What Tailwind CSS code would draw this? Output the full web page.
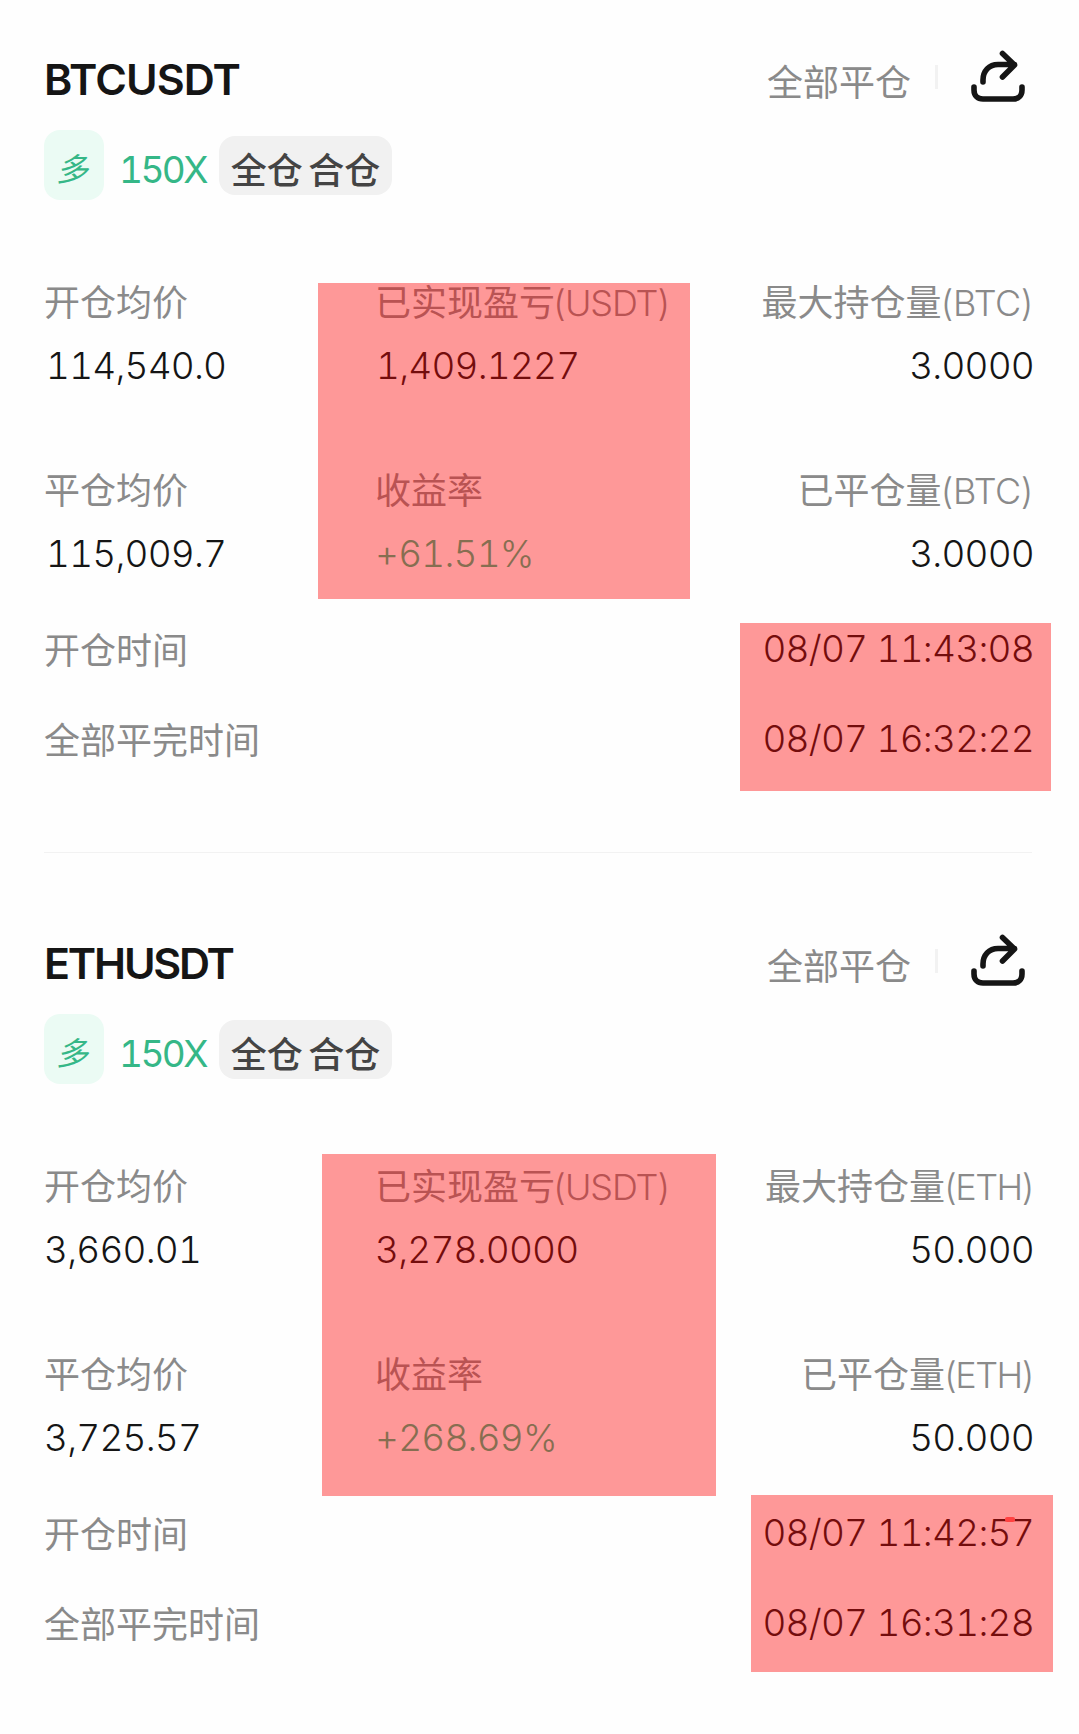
<!DOCTYPE html>
<html lang="zh-CN">
<head>
<meta charset="utf-8">
<title>历史仓位</title>
<script src="https://cdn.jsdelivr.net/npm/@tailwindcss/browser@4"></script>
</head>
<body class="relative h-[1734px] w-[1079px] overflow-hidden bg-[#fefefe] font-['Inter','Noto_Sans_CJK_SC',sans-serif] font-light text-[#151515]">

<section class="h-[884px] pl-11 pr-[45px] pt-[50px]">
  <header class="flex h-[58px] items-center justify-between">
    <h2 class="text-[43px] leading-[58px] font-semibold tracking-[-0.9px]">BTCUSDT</h2>
    <div class="flex items-center text-[36px] leading-[58px] text-[#8a8a8a]">
      <span class="pt-[7px] font-normal">全部平仓</span>
      <span class="mb-1 ml-[24px] h-6 w-[3px] bg-[#f2f2f2]"></span>
      <svg class="mb-[5px] ml-[30px] mr-1.5 h-[60px] w-[60px]" viewBox="0 0 60 60" fill="none" stroke="#151515" stroke-width="5.6" stroke-linecap="round" stroke-linejoin="round"><path d="M6 40v3c0 5.500 3.500 9 9 9h30c5.500 0 9-3.500 9-9v-3M15 35v-2c0-9 6-15.500 15-15.500h16.500M34.500 6.500 46.500 18 34.500 30"/></svg>
    </div>
  </header>
  <div class="mt-[22px] flex h-[70px] items-center">
    <span class="flex h-[70px] w-[60px] items-center justify-center rounded-[16px] bg-[#ebfbf4] pt-[9px] pr-1 text-[32px] text-[#35b787] italic font-normal">多</span>
    <span class="ml-[15px] w-[100px] pt-[9px] text-[37px] leading-[61px] font-normal tabular-nums tracking-[-2.6px] text-[#35b787]">150X</span>
    <span class="flex h-[59px] w-[173px] items-center justify-center rounded-[16px] bg-[#f1f1f1] pt-[12px] text-[36px] font-medium text-[#444] [word-spacing:-4px]">全仓 合仓</span>
  </div>
  <div class="mt-[82px] grid grid-cols-[331px_1fr_auto] grid-rows-[40px_40px_40px_40px] gap-y-[23px] leading-10 text-[37px] tabular-nums">
    <span class="pt-[1px] text-[36px] font-normal text-[#8a8a8a]">开仓均价</span>
    <span class="pt-[1px] text-[36px] font-normal text-[#8a8a8a]">已实现盈亏<span class="-ml-[3px] font-light tracking-[-1.1px]">(USDT)</span></span>
    <span class="pt-[1px] text-right text-[36px] font-normal text-[#8a8a8a]">最大持仓量<span class="-ml-[2px] font-light tracking-[-0.6px]">(BTC)</span></span>
    <span class="pt-[1px] pl-[2px] tracking-[-0.8px]">114,540.0</span>
    <span class="pt-[1px] pl-[1px] tracking-[-0.8px]">1,409.1227</span>
    <span class="pt-[1px] text-right tracking-[-0.8px]">3.0000</span>
    <span class="mt-[62px] pt-[1px] text-[36px] font-normal text-[#8a8a8a]">平仓均价</span>
    <span class="mt-[62px] pt-[1px] text-[36px] font-normal text-[#8a8a8a]">收益率</span>
    <span class="mt-[62px] pt-[1px] text-right text-[36px] font-normal text-[#8a8a8a]">已平仓量<span class="-ml-[2px] font-light tracking-[-0.6px]">(BTC)</span></span>
    <span class="mt-[62px] pt-[1px] pl-[2px] tracking-[-0.8px]">115,009.7</span>
    <span class="mt-[62px] pt-[1px] tracking-[-0.8px] text-[#35b787]">+61.51%</span>
    <span class="mt-[62px] pt-[1px] text-right tracking-[-0.8px]">3.0000</span>
  </div>
  <dl class="mt-[118px] flex flex-col gap-[50px] leading-10 text-[37px] tabular-nums">
    <div class="flex h-10 justify-between"><dt class="pt-[2px] text-[36px] font-normal text-[#8a8a8a]">开仓时间</dt><dd class="tracking-[-0.75px]">08/07 11:43:08</dd></div>
    <div class="flex h-10 justify-between"><dt class="pt-[2px] text-[36px] font-normal text-[#8a8a8a]">全部平完时间</dt><dd class="tracking-[-0.75px]">08/07 16:32:22</dd></div>
  </dl>
  <hr class="mt-[93px] mr-[2px] border-[#f2f2f2]">
</section>

<section class="h-[850px] pl-11 pr-[45px] pt-[50px]">
  <header class="flex h-[58px] items-center justify-between">
    <h2 class="text-[43px] leading-[58px] font-semibold tracking-[-2.2px]">ETHUSDT</h2>
    <div class="flex items-center text-[36px] leading-[58px] text-[#8a8a8a]">
      <span class="pt-[7px] font-normal">全部平仓</span>
      <span class="mb-1 ml-[24px] h-6 w-[3px] bg-[#f2f2f2]"></span>
      <svg class="mb-[5px] ml-[30px] mr-1.5 h-[60px] w-[60px]" viewBox="0 0 60 60" fill="none" stroke="#151515" stroke-width="5.6" stroke-linecap="round" stroke-linejoin="round"><path d="M6 40v3c0 5.500 3.500 9 9 9h30c5.500 0 9-3.500 9-9v-3M15 35v-2c0-9 6-15.500 15-15.500h16.500M34.500 6.500 46.500 18 34.500 30"/></svg>
    </div>
  </header>
  <div class="mt-[22px] flex h-[70px] items-center">
    <span class="flex h-[70px] w-[60px] items-center justify-center rounded-[16px] bg-[#ebfbf4] pt-[9px] pr-1 text-[32px] text-[#35b787] italic font-normal">多</span>
    <span class="ml-[15px] w-[100px] pt-[9px] text-[37px] leading-[61px] font-normal tabular-nums tracking-[-2.6px] text-[#35b787]">150X</span>
    <span class="flex h-[59px] w-[173px] items-center justify-center rounded-[16px] bg-[#f1f1f1] pt-[12px] text-[36px] font-medium text-[#444] [word-spacing:-4px]">全仓 合仓</span>
  </div>
  <div class="mt-[82px] grid grid-cols-[331px_1fr_auto] grid-rows-[40px_40px_40px_40px] gap-y-[23px] leading-10 text-[37px] tabular-nums">
    <span class="pt-[1px] text-[36px] font-normal text-[#8a8a8a]">开仓均价</span>
    <span class="pt-[1px] text-[36px] font-normal text-[#8a8a8a]">已实现盈亏<span class="-ml-[3px] font-light tracking-[-1.1px]">(USDT)</span></span>
    <span class="pt-[1px] text-right text-[36px] font-normal text-[#8a8a8a]">最大持仓量<span class="-ml-[2px] font-light tracking-[-1.6px]">(ETH)</span></span>
    <span class="pt-[1px] tracking-[-0.8px]">3,660.01</span>
    <span class="pt-[1px] tracking-[-0.8px]">3,278.0000</span>
    <span class="pt-[1px] text-right tracking-[-0.8px]">50.000</span>
    <span class="mt-[62px] pt-[1px] text-[36px] font-normal text-[#8a8a8a]">平仓均价</span>
    <span class="mt-[62px] pt-[1px] text-[36px] font-normal text-[#8a8a8a]">收益率</span>
    <span class="mt-[62px] pt-[1px] text-right text-[36px] font-normal text-[#8a8a8a]">已平仓量<span class="-ml-[2px] font-light tracking-[-1.6px]">(ETH)</span></span>
    <span class="mt-[62px] pt-[1px] tracking-[-0.8px]">3,725.57</span>
    <span class="mt-[62px] pt-[1px] tracking-[-0.8px] text-[#35b787]">+268.69%</span>
    <span class="mt-[62px] pt-[1px] text-right tracking-[-0.8px]">50.000</span>
  </div>
  <dl class="mt-[118px] flex flex-col gap-[50px] leading-10 text-[37px] tabular-nums">
    <div class="flex h-10 justify-between"><dt class="pt-[2px] text-[36px] font-normal text-[#8a8a8a]">开仓时间</dt><dd class="tracking-[-0.75px]">08/07 11:42:57</dd></div>
    <div class="flex h-10 justify-between"><dt class="pt-[2px] text-[36px] font-normal text-[#8a8a8a]">全部平完时间</dt><dd class="tracking-[-0.75px]">08/07 16:31:28</dd></div>
  </dl>
</section>

<!-- highlight overlays -->
<div class="absolute left-[318px] top-[283px] h-[316px] w-[372px] bg-[#ff0000]/40"></div>
<div class="absolute left-[740px] top-[623px] h-[168px] w-[311px] bg-[#ff0000]/40"></div>
<div class="absolute left-[322px] top-[1154px] h-[342px] w-[394px] bg-[#ff0000]/40"></div>
<div class="absolute left-[751px] top-[1495px] h-[177px] w-[302px] bg-[#ff0000]/40"></div>
<div class="absolute left-[1005px] top-[1517px] h-[5px] w-[10px] rounded-[2px] bg-[#ff4141]"></div>
</body>
</html>
